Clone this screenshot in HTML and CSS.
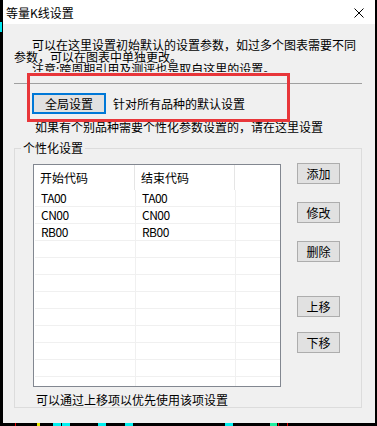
FILE: index.html
```html
<!DOCTYPE html>
<html lang="zh-CN">
<head>
<meta charset="utf-8">
<title>等量K线设置</title>
<link rel="stylesheet" href="styles.css">
</head>
<body>
<div class="desk">
  <div class="win">
    <div class="titlebar">
      <span class="title">等量K线设置</span>
      <svg class="close" width="10" height="10" viewBox="0 0 10 10"><path d="M0.5 0.5 L9.5 9.5 M9.5 0.5 L0.5 9.5" stroke="#000" stroke-width="1" fill="none"/></svg>
    </div>
    <div class="client">
      <div class="intro">
        <p>可以在这里设置初始默认的设置参数，如过多个图表需要不同参数，可以在图表中单独更改。</p>
        <p>注意:跨周期引用及测评也是取自这里的设置。</p>
      </div>
      <div class="sep"></div>
      <div class="globalrow">
        <div class="btn focus">全局设置</div>
        <span class="globaltext">针对所有品种的默认设置</span>
      </div>
      <div class="hint">如果有个别品种需要个性化参数设置的，请在这里设置</div>
      <fieldset class="group">
        <legend>个性化设置</legend>
        <div class="groupbody">
          <div class="list">
            <div class="lhead">
              <div class="hc c1">开始代码</div>
              <div class="hc c2">结束代码</div>
              <div class="hc c3"></div>
            </div>
            <div class="lrow"><div class="dc d1">TA00</div><div class="dc d2">TA00</div><div class="dc d3"></div></div>
            <div class="lrow"><div class="dc d1">CN00</div><div class="dc d2">CN00</div><div class="dc d3"></div></div>
            <div class="lrow"><div class="dc d1">RB00</div><div class="dc d2">RB00</div><div class="dc d3"></div></div>
            <div class="lrow"><div class="dc d1"></div><div class="dc d2"></div><div class="dc d3"></div></div>
            <div class="lrow"><div class="dc d1"></div><div class="dc d2"></div><div class="dc d3"></div></div>
            <div class="lrow"><div class="dc d1"></div><div class="dc d2"></div><div class="dc d3"></div></div>
            <div class="lrow"><div class="dc d1"></div><div class="dc d2"></div><div class="dc d3"></div></div>
            <div class="lrow"><div class="dc d1"></div><div class="dc d2"></div><div class="dc d3"></div></div>
            <div class="lrow"><div class="dc d1"></div><div class="dc d2"></div><div class="dc d3"></div></div>
            <div class="lrow"><div class="dc d1"></div><div class="dc d2"></div><div class="dc d3"></div></div>
            <div class="lrow"><div class="dc d1"></div><div class="dc d2"></div><div class="dc d3"></div></div>
            <div class="lrow"><div class="dc d1"></div><div class="dc d2"></div><div class="dc d3"></div></div>
          </div>
          <div class="sidebtns">
            <div class="btn side b-add">添加</div>
            <div class="btn side b-mod">修改</div>
            <div class="btn side b-del">删除</div>
            <div class="btn side b-up">上移</div>
            <div class="btn side b-down">下移</div>
          </div>
        </div>
        <div class="foot">可以通过上移项以优先使用该项设置</div>
      </fieldset>
    </div>
  </div>
  <div class="annot"></div>
  <div class="mark m-left"></div>
  <div class="mark m1"></div>
  <div class="mark m2"></div>
  <div class="mark m3"></div>
  <div class="mark m4"></div>
  <div class="mark m5"></div>
  <div class="mark m6"></div>
  <div class="mark m7"></div>
  <div class="mark m8"></div>
  <div class="mark m9"></div>
  <div class="mark m10"></div>
</div>
</body>
</html>
```
FILE: styles.css
```css
html, body {
  margin: 0;
  padding: 0;
  background: #000;
}
body {
  font-family: "Noto Sans CJK SC", "Microsoft YaHei", sans-serif;
  font-size: 12px;
  color: #000;
}
.desk {
  position: relative;
  width: 377px;
  height: 426px;
  overflow: hidden;
  background: #000;
}
.win {
  margin-left: 3px;
  width: 372px;
  height: 423px;
  display: flex;
  flex-direction: column;
  background: #f0f0f0;
}
.titlebar {
  height: 24px;
  background: #fff;
  display: flex;
  align-items: center;
  justify-content: space-between;
  padding-left: 3px;
  padding-right: 11px;
  flex-shrink: 0;
}
.title {
  font-size: 12px;
  line-height: 14px;
  margin-top: 1px;
}
.close {
  display: block;
  margin-top: 2px;
}
.client {
  flex: 1;
  padding-left: 11px;
}
.intro {
  margin-top: 15px;
  width: 348px;
  height: 33px;
  overflow: hidden;
  line-height: 12px;
}
.intro p {
  margin: 0;
  text-indent: 18px;
}
.sep {
  margin-top: 11px;
  width: 348px;
  height: 0;
  border-top: 1px solid #a0a0a0;
}
.globalrow {
  margin-top: 9px;
  margin-left: 18px;
  display: flex;
  align-items: center;
}
.btn {
  box-sizing: border-box;
  background: #e1e1e1;
  border: 1px solid #adadad;
  display: flex;
  align-items: center;
  justify-content: center;
  line-height: 14px;
}
.btn.focus {
  width: 74px;
  height: 21px;
  border: 2px solid #0078d7;
}
.globaltext {
  margin-left: 7px;
  line-height: 14px;
}
.hint {
  margin-top: 6px;
  margin-left: 21px;
  line-height: 14px;
}
.group {
  margin: 7px 0 0 0;
  padding: 0;
  width: 348px;
  box-sizing: border-box;
  border: 1px solid #dcdcdc;
  min-width: 0;
}
.group legend {
  margin-left: 6px;
  padding: 0 2px;
  line-height: 14px;
}
.groupbody {
  display: flex;
  margin-top: 9px;
  padding-left: 18px;
}
.list {
  box-sizing: border-box;
  width: 248px;
  height: 223px;
  border: 1px solid #828790;
  background: #fff;
  overflow: hidden;
}
.lhead {
  display: flex;
  height: 25px;
}
.hc {
  box-sizing: border-box;
  height: 25px;
  padding-left: 6px;
  padding-top: 6px;
  line-height: 14px;
}
.hc.c1 { width: 101px; border-right: 1px solid #e5e5e5; }
.hc.c2 { width: 100px; border-right: 1px solid #e5e5e5; }
.hc.c3 { width: 45px; }
.lrow {
  display: flex;
  margin-left: 1px;
  width: 245px;
  height: 17px;
  box-sizing: border-box;
  border-bottom: 1px solid #f0f0f0;
}
.dc {
  box-sizing: border-box;
  height: 16px;
  line-height: 16px;
  padding-left: 6px;
  font-size: 12px;
  letter-spacing: -0.5px;
}
.dc.d1 { width: 101px; border-right: 1px solid #f0f0f0; }
.dc.d2 { width: 100px; border-right: 1px solid #f0f0f0; }
.dc.d3 { width: 44px; }
.sidebtns {
  margin-left: 16px;
  margin-top: -1px;
  display: flex;
  flex-direction: column;
}
.btn.side {
  width: 43px;
  height: 21px;
}
.b-mod, .b-del { margin-top: 18px; }
.b-up { margin-top: 34px; }
.b-down { margin-top: 15px; }
.foot {
  margin-top: 6px;
  margin-left: 21px;
  line-height: 14px;
}
.annot {
  position: absolute;
  left: 27px;
  top: 73px;
  width: 263px;
  height: 49px;
  box-sizing: border-box;
  border: 3px solid #e8363a;
}
.mark {
  position: absolute;
  top: 423px;
  height: 3px;
}
.m-left { left: 0; top: 22px; width: 2px; height: 10px; background: #00e5ee; }
.m1 { left: 15px; width: 1px; background: #e00000; }
.m2 { left: 37px; width: 3px; background: #e8e800; }
.m3 { left: 53px; width: 8px; background: #00f0f0; }
.m4 { left: 62px; width: 8px; background: #00f0f0; }
.m5 { left: 98px; width: 8px; background: #00f0f0; }
.m6 { left: 125px; width: 8px; background: #00f0f0; }
.m7 { left: 225px; width: 8px; background: #00f0f0; }
.m8 { left: 270px; width: 7px; background: #20f0a0; }
.m9 { left: 278px; width: 1px; background: #e00000; }
.m10 { left: 287px; width: 1px; background: #e00000; }
```
